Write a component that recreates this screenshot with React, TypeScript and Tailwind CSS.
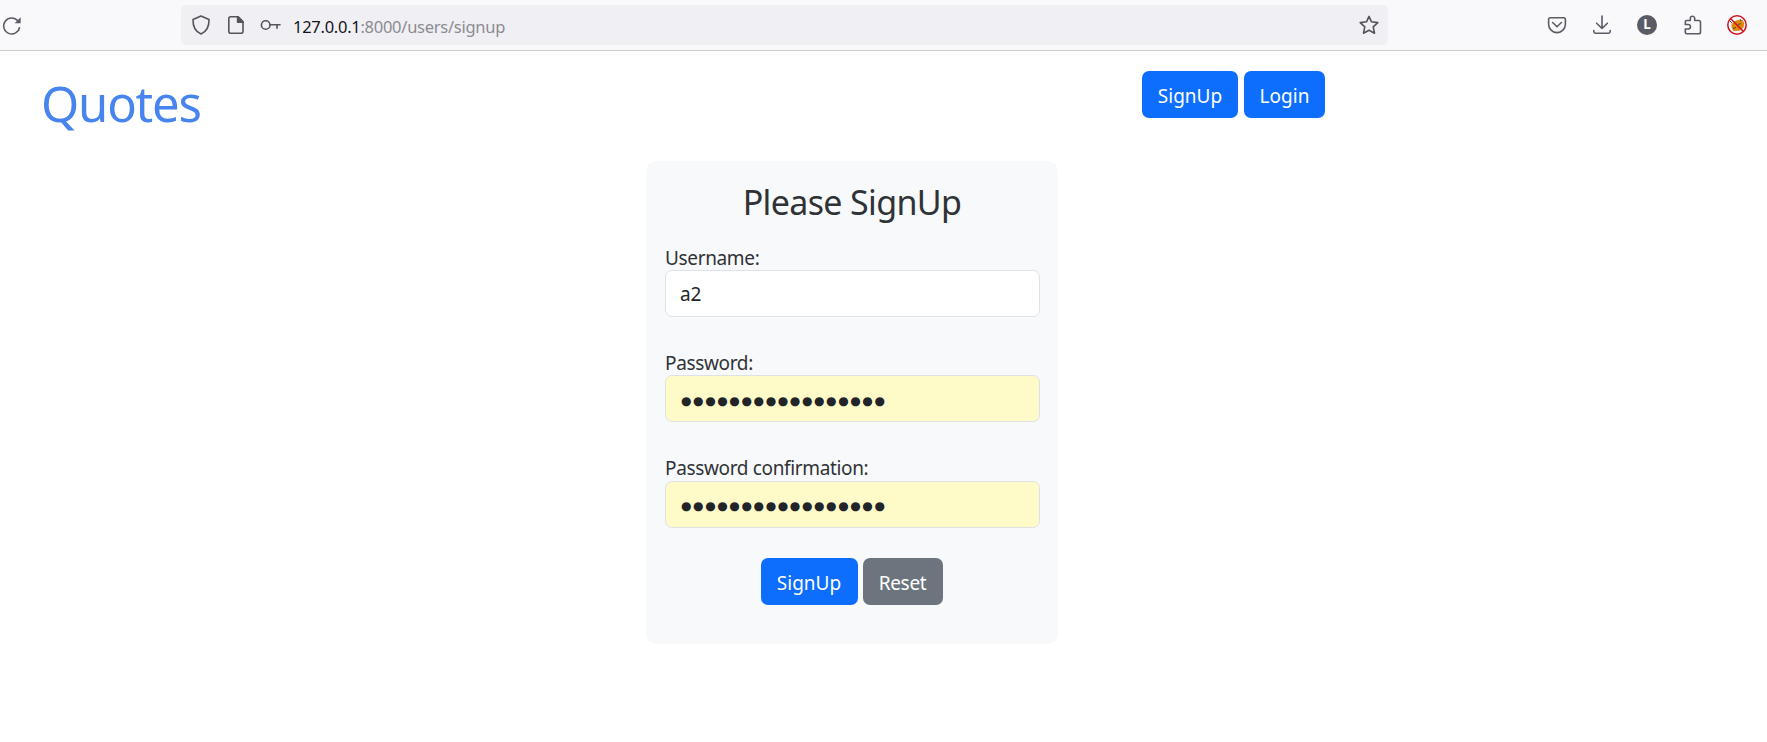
import React from "react";

const dots = "●".repeat(17);

function Toolbar() {
  return (
    <header className="flex h-[51px] items-center border-b border-[#cccccc] bg-[#f9f9fb] text-[#5b5b66]">
      <svg className="ml-[2px] mt-[1px] h-5 w-5 shrink-0" viewBox="0 0 20 20" fill="none" stroke="currentColor" strokeWidth="1.5">
        <path d="M17.6 11.2A8 8 0 1 1 15.8 4.8" />
        <path d="M18.6 1.2V7.2H12.6Z" fill="currentColor" stroke="none" />
      </svg>
      <div className="ml-[159px] flex h-10 w-[1207px] shrink-0 items-center rounded-[5px] bg-[#f0f0f4] text-[#54545c]">
        <svg className="ml-[10px] h-5 w-5" viewBox="0 0 20 20" fill="none" stroke="currentColor" strokeWidth="1.6" strokeLinejoin="round">
          <path d="M10 1 18 4.4C18.2 11.5 15.5 16.5 10 19 4.5 16.5 1.8 11.5 2 4.4Z" />
        </svg>
        <svg className="ml-[15px] h-5 w-5" viewBox="0 0 20 20" fill="none" stroke="currentColor" strokeWidth="1.6" strokeLinejoin="round">
          <path d="M4.8 1.8H12.2L17 6.6V16.2A2 2 0 0 1 15 18.2H4.8A2 2 0 0 1 2.8 16.2V3.8A2 2 0 0 1 4.8 1.8Z" />
          <path d="M11.6 1.8V7.2H17Z" fill="currentColor" />
        </svg>
        <svg className="ml-[14px] h-5 w-[21px]" viewBox="0 0 21 20" fill="none" stroke="currentColor" strokeWidth="1.6" strokeLinecap="round">
          <circle cx="5.7" cy="10" r="4.3" />
          <path d="M10 9.7H20M17 9.7V13.3" />
        </svg>
        <div className="ml-[12px] mt-[3px] grow whitespace-nowrap text-[16.5px] leading-6 tracking-[-0.27px] text-[#8b8b92]">
          <span className="text-[#15141a]">127.0.0.1</span>:8000/users/signup
        </div>
        <svg className="mr-[9px] h-5 w-5" viewBox="0 0 20 20" fill="none" stroke="currentColor" strokeWidth="1.6" strokeLinejoin="round">
          <path d="M10 1.4 12.5 6.8 18.8 7.6 14.2 11.9 15.5 18.2 10 15.2 4.5 18.2 5.8 11.9 1.2 7.6 7.5 6.8Z" />
        </svg>
      </div>
      <div className="ml-[159px] flex shrink-0 items-center gap-[25px]">
        <svg className="h-5 w-5" viewBox="0 0 20 20" fill="none" stroke="currentColor" strokeWidth="1.6" strokeLinecap="round" strokeLinejoin="round">
          <path d="M3.3 2.8H16.7A1.7 1.7 0 0 1 18.4 4.5V9.2A8.4 8.4 0 0 1 1.6 9.2V4.5A1.7 1.7 0 0 1 3.3 2.8Z" />
          <path d="M5.6 7.5 10 11.8 14.4 7.5" />
        </svg>
        <svg className="h-5 w-5" viewBox="0 0 20 20" fill="none" stroke="currentColor" strokeWidth="1.6" strokeLinecap="round" strokeLinejoin="round">
          <path d="M10 1V13.5M4.6 8.2 10 13.5 15.4 8.2M1.8 15.5V16.5A2 2 0 0 0 3.8 18.3H16.2A2 2 0 0 0 18.2 16.5V15.5" />
        </svg>
        <span className="flex h-5 w-5 items-center justify-center rounded-full bg-[#5b5b66] text-[13.5px] font-bold leading-none text-white">L</span>
        <svg className="ml-px h-5 w-5" viewBox="0 0 20 20" fill="none" stroke="currentColor" strokeWidth="1.6" strokeLinejoin="round">
          <path d="M2.3 9V7A1.5 1.5 0 0 1 3.8 5.5H7.3V3.5A2 2 0 0 1 11.7 3.5V5.5H15.7A1.8 1.8 0 0 1 17.5 7.3V17A1.8 1.8 0 0 1 15.7 18.8H3.8A1.5 1.5 0 0 1 2.3 17.3V14H5.2A2.2 2.2 0 0 0 5.2 9.5H2.3Z" />
        </svg>
        <svg className="-ml-px h-5 w-5" viewBox="0 0 20 20" fill="none">
          <path d="M4.5 8.5C6 9 7.5 5.5 11 5L15.500 5 17.300 8 16.500 12.500 12.500 15.800 6.500 16 4.500 12.500Z" fill="#e0870f" />
          <path d="M3 6 5 8M6 13.500 9 12.500M13 4 14 6M11 9.500 14 8.500" stroke="#5f4a2c" />
          <circle cx="10" cy="10" r="9.2" stroke="#cf1020" strokeWidth="1.5" />
          <path d="M3.5 3.5 16.5 16.5" stroke="#cf1020" strokeWidth="1.5" />
        </svg>
      </div>
    </header>
  );
}

function Field({ label, value }: { label: string; value: string }) {
  const secret = value === dots;
  return (
    <label className="block h-[105.4px] text-[19px] text-[#2f3336]">
      <span className="block h-[28px] pt-[0.5px] leading-[30px] tracking-[-0.35px]">{label}</span>
      <span className={secret
        ? "flex h-[47px] items-center rounded-[7px] border border-[#dee2e6] bg-[#fffbc8] pl-[15px] text-[#212529]"
        : "flex h-[47px] items-center rounded-[7px] border border-[#dee2e6] bg-white pl-[14px] pt-[2px] text-[#212529]"}>
        <span className={secret ? "pt-[4px] font-['DejaVu_Sans'] text-[12px] tracking-[1.62px]" : "tracking-[-0.1px]"}>{value}</span>
      </span>
    </label>
  );
}

export default function App() {
  return (
    <div className="min-h-[742px] bg-white font-['Noto_Sans',sans-serif]">
      <Toolbar />
      <div className="flex h-[110px] justify-between pl-[41px] pr-[442px] pt-[20px]">
        <h1 className="text-[49px] leading-[64px] tracking-[-1.2px] text-[#4784ee]">Quotes</h1>
        <nav className="flex gap-[6px] text-[19px] text-white">
          <a className="flex h-[47px] w-[96px] items-center justify-center rounded-[7px] bg-[#0d6efd] pt-[3px]">SignUp</a>
          <a className="flex h-[47px] w-[81px] items-center justify-center rounded-[7px] bg-[#0d6efd] pt-[3px]">Login</a>
        </nav>
      </div>
      <main className="ml-[646px] h-[483px] w-[412px] rounded-[10px] bg-[#f8f9fb] pl-[19px] pr-[18px] pt-[18px]">
        <h2 className="h-[63px] pr-px text-center text-[34px] leading-[47px] tracking-[-0.65px] text-[#2f3336]">Please SignUp</h2>
        <Field label="Username:" value="a2" />
        <Field label="Password:" value={dots} />
        <Field label="Password confirmation:" value={dots} />
        <div className="-mt-[0.2px] flex justify-center gap-[5px] pr-[2px] text-[19px] text-white">
          <button className="h-[47px] w-[97px] rounded-[7px] bg-[#0d6efd] pt-[3px]">SignUp</button>
          <button className="h-[47px] w-[80px] rounded-[7px] bg-[#6c757d] pt-[3px] tracking-[-0.3px]">Reset</button>
        </div>
      </main>
    </div>
  );
}
